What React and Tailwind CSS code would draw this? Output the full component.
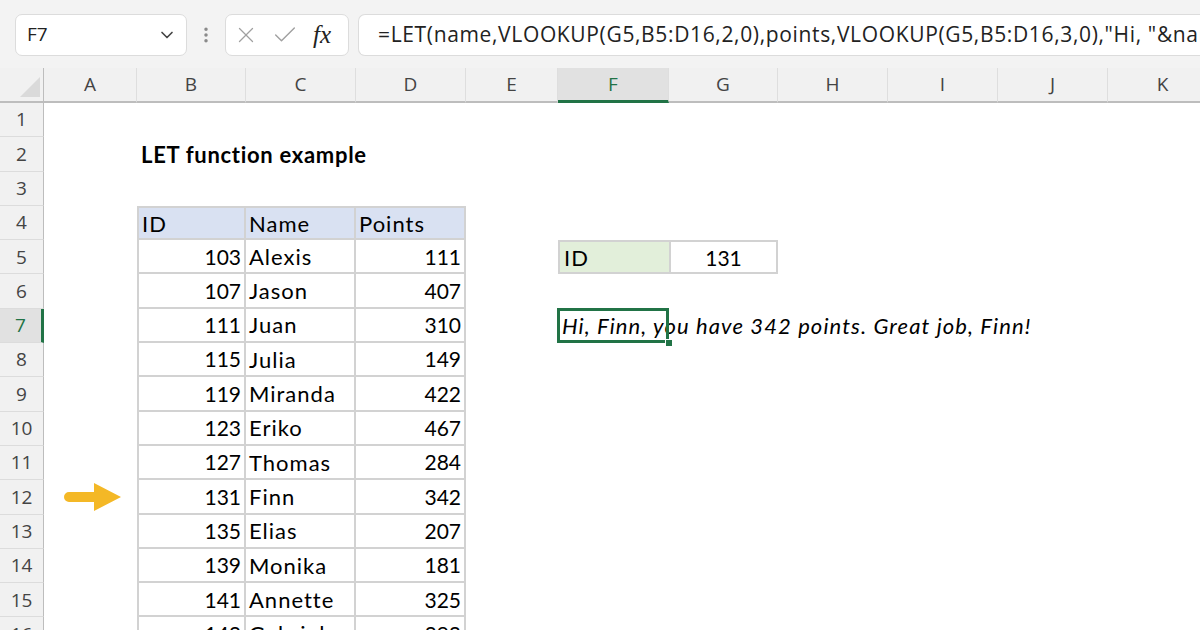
import { ChevronDown, X, Check, EllipsisVertical } from 'lucide-react';

const COLS = ['A', 'B', 'C', 'D', 'E', 'F', 'G', 'H', 'I', 'J', 'K'];

const people = [
  [103, 'Alexis', 111],
  [107, 'Jason', 407],
  [111, 'Juan', 310],
  [115, 'Julia', 149],
  [119, 'Miranda', 422],
  [123, 'Eriko', 467],
  [127, 'Thomas', 284],
  [131, 'Finn', 342],
  [135, 'Elias', 207],
  [139, 'Monika', 181],
  [141, 'Annette', 325],
  [143, 'Gabriel', 392],
];

const cellFont = { fontFamily: 'Lato, "Open Sans", sans-serif' };

function Arrow() {
  return (
    <svg width="58" height="30" viewBox="0 0 58 30">
      <path d="M5 10 H30 V1 L57 15 L30 29 V20 H5 A5 5 0 0 1 5 10 Z" fill="#f4b826" />
    </svg>
  );
}

function tableCell(r, c) {
  // table sits in B4:D16
  const inTable = r >= 4 && c >= 1 && c <= 3;
  if (!inTable) return null;
  let cls = 'border-r-2 border-b-2 border-[#d2d2d2]';
  if (r === 4) cls += ' border-t-2 bg-[#d9e1f2]';
  if (c === 1) cls += ' border-l-2';
  let content = null;
  let align = 'justify-start pl-[3px] text-[22px] tracking-[1px]';
  if (r === 4) {
    content = ['ID', 'Name', 'Points'][c - 1];
  } else {
    const p = people[r - 5];
    content = p[c - 1];
    if (c !== 2) align = 'justify-end pr-[3px] text-[21px]';
  }
  return { cls, content, align };
}

function Cell({ r, c }) {
  const t = tableCell(r, c);
  if (t) {
    return (
      <div className={`flex items-center ${t.align} ${t.cls} text-black whitespace-nowrap`} style={cellFont}>
        {t.content}
      </div>
    );
  }
  if (r === 2 && c === 1) {
    return (
      <div className="flex items-center pl-[4px] whitespace-nowrap font-bold text-[22px] tracking-[0.7px] text-black" style={cellFont}>
        LET function example
      </div>
    );
  }
  if (r === 5 && c === 5) {
    return (
      <div className="flex items-center pl-[4px] border-2 border-r-0 border-[#d2d2d2] bg-[#e2efda] text-[22px] tracking-[1px] text-black" style={cellFont}>
        ID
      </div>
    );
  }
  if (r === 5 && c === 6) {
    return (
      <div className="flex items-center justify-center border-2 border-[#d2d2d2] text-[21px] text-black" style={cellFont}>
        131
      </div>
    );
  }
  if (r === 7 && c === 5) {
    return (
      <div className="relative flex items-center pl-[4px] whitespace-nowrap italic text-[22px] tracking-[1.1px] text-black z-10" style={cellFont}>
        Hi, Finn, you have 342 points. Great job, Finn!
        <div className="absolute inset-0 -top-[1px] -left-[1px] border-[3px] border-[#217346]"></div>
        <div className="absolute -right-[4px] -bottom-[4px] w-[8px] h-[8px] bg-[#217346] border border-white"></div>
      </div>
    );
  }
  if (r === 12 && c === 0) {
    return (
      <div className="flex items-center pl-[20px]">
        <Arrow />
      </div>
    );
  }
  return <div></div>;
}

export default function App() {
  const rows = Array.from({ length: 16 }, (_, i) => i + 1);
  return (
    <div className="w-[1200px] h-[630px] overflow-hidden bg-white">
      {/* formula bar */}
      <div className="h-[68px] bg-[#f3f3f3] flex items-center gap-[9px] pl-[15px] pt-[1px]" style={{ fontFamily: '"Open Sans", "Noto Sans", sans-serif' }}>
        <div className="w-[172px] h-[42px] shrink-0 bg-white rounded-[7px] border border-[#dcdcdc] flex items-center justify-between pl-[11px] pr-[9px]">
          <span className="text-[19px] text-[#222]">F7</span>
          <ChevronDown size={20} strokeWidth={2} className="text-[#444]" />
        </div>
        <EllipsisVertical size={20} strokeWidth={2.2} className="text-[#8a8a8a] shrink-0" />
        <div className="w-[124px] h-[42px] shrink-0 bg-white rounded-[7px] border border-[#dcdcdc] flex items-center pl-[7px] gap-[12px]">
          <X size={26} strokeWidth={1.2} className="text-[#a0a0a0]" />
          <Check size={28} strokeWidth={1.2} className="text-[#a0a0a0]" />
          <span className="text-[25px] italic text-[#222] ml-[2px] leading-none" style={{ fontFamily: '"Liberation Serif", serif' }}>fx</span>
        </div>
        <div className="flex-1 h-[42px] bg-white rounded-l-[7px] border border-r-0 border-[#dcdcdc] flex items-center pl-[19px] overflow-hidden whitespace-nowrap">
          <span className="text-[21px] text-[#222] tracking-[0.65px]">=LET(name,VLOOKUP(G5,B5:D16,2,0),points,VLOOKUP(G5,B5:D16,3,0),"Hi, "&name&", you have "&points&" points. Great job, "&name&"!")</span>
        </div>
      </div>

      {/* sheet grid */}
      <div className="grid grid-cols-[44px_93px_109px_110px_110px_92px_111px_109px_110px_110px_110px_110px] grid-rows-[35px_repeat(16,34.3px)]">
        {/* corner */}
        <div className="bg-[#f1f1f1] border-r border-b-2 border-[#bdbdbd] relative">
          <div className="absolute right-[3px] bottom-[4px] w-0 h-0 border-l-[20px] border-l-transparent border-b-[20px] border-b-[#dadada]"></div>
        </div>
        {COLS.map((col) => (
          <div
            key={col}
            className={`flex items-center justify-center text-[19px] border-r border-[#dedede] ${
              col === 'F'
                ? 'bg-[#e1e1e1] border-b-[3px] border-b-[#217346] text-[#217346]'
                : 'bg-[#f1f1f1] border-b-2 border-b-[#bdbdbd] text-[#444]'
            }`}
            style={{ fontFamily: '"Open Sans", "Noto Sans", sans-serif' }}
          >
            {col}
          </div>
        ))}
        {rows.map((r) => (
          <RowCells key={r} r={r} />
        ))}
      </div>
    </div>
  );
}

function RowCells({ r }) {
  return (
    <>
      <div
        className={`flex items-center justify-center text-[19px] border-b border-[#dcdcdc] ${
          r === 7
            ? 'bg-[#e1e1e1] border-r-[3px] border-r-[#217346] text-[#217346]'
            : 'bg-[#f1f1f1] border-r border-r-[#bdbdbd] text-[#444]'
        }`}
        style={{ fontFamily: '"Open Sans", "Noto Sans", sans-serif' }}
      >
        {r}
      </div>
      {COLS.map((_, c) => (
        <Cell key={c} r={r} c={c} />
      ))}
    </>
  );
}
